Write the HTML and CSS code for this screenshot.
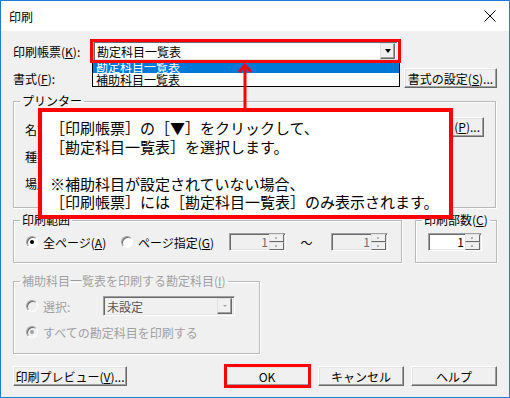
FILE: index.html
```html
<!DOCTYPE html>
<html lang="ja">
<head>
  <meta charset="UTF-8" />
  <title>印刷</title>
  <link rel="stylesheet" href="styles.css">
</head>
<body>

  <div class="window">
    <div class="titlebar">
      <span class="title">印刷</span>
      <svg class="close" width="12" height="12" viewBox="0 0 12 12">
        <path d="M0.5 0.5L11.5 11.5M11.5 0.5L0.5 11.5" stroke="#000" stroke-width="1" fill="none"/>
      </svg>
    </div>

    <div class="dialog">
      <div class="row row-report">
        <label class="lbl">印刷帳票(<u>K</u>):</label>
        <div class="combo combo-report">
          <span class="combo-text">勘定科目一覧表</span>
          <span class="drop"><i class="tri"></i></span>
        </div>
      </div>

      <div class="row row-format">
        <label class="lbl">書式(<u>F</u>):</label>
        <button class="btn btn-format">書式の設定(<u>S</u>)...</button>
      </div>

      <!-- printer -->
      <fieldset class="group group-printer">
        <legend>プリンター</legend>
        <div class="printer-body">
          <div class="prow">
            <span>名前(N):</span>
            <button class="btn btn-prop"><span>プロパティ(<u>P</u>)...</span></button>
          </div>
          <div class="prow"><span>種類:</span></div>
          <div class="prow"><span>場所:</span></div>
        </div>
      </fieldset>

      <div class="range-row">
        <fieldset class="group group-range">
          <legend>印刷範囲</legend>
          <div class="range-body">
            <span class="opt opt-all"><i class="radio checked"></i><span>全ページ(<u>A</u>)</span></span>
            <span class="opt opt-page"><i class="radio"></i><span>ページ指定(<u>G</u>)</span></span>
            <div class="spin disabled"><span class="val">1</span><span class="spin-btns"><i class="sb"></i><i class="sb"></i></span></div>
            <span class="tilde">〜</span>
            <div class="spin disabled"><span class="val">1</span><span class="spin-btns"><i class="sb"></i><i class="sb"></i></span></div>
          </div>
        </fieldset>

        <fieldset class="group group-copies">
          <legend>印刷部数(<u>C</u>)</legend>
          <div class="copies-body">
            <div class="spin spin-copies"><span class="val">1</span><span class="spin-btns"><i class="sb"></i><i class="sb"></i></span></div>
          </div>
        </fieldset>
      </div>

      <fieldset class="group group-sub off">
        <legend>補助科目一覧表を印刷する勘定科目(<u>I</u>)</legend>
        <div class="sub-body">
          <div class="sub-row">
            <span class="opt opt-select"><i class="radio"></i><span>選択:</span></span>
            <div class="combo combo-sub">
              <span class="combo-text">未設定</span>
              <span class="drop"><i class="tri"></i></span>
            </div>
          </div>
          <div class="sub-row">
            <span class="opt"><i class="radio checked"></i><span>すべての勘定科目を印刷する</span></span>
          </div>
        </div>
      </fieldset>

      <div class="actions">
        <button class="btn btn-preview">印刷プレビュー(<u>V</u>)...</button>
        <button class="btn btn-ok">OK</button>
        <button class="btn btn-cancel">キャンセル</button>
        <button class="btn btn-help">ヘルプ</button>
      </div>
    </div>

    <!-- overlays: open list, callout and highlights -->
    <div class="droplist">
      <div class="item sel">勘定科目一覧表</div>
      <div class="item">補助科目一覧表</div>
    </div>
    <div class="mark mark-combo"></div>
    <svg class="arrow" width="18" height="48" viewBox="0 0 18 48">
      <path d="M9 3V47" stroke="#ff0000" stroke-width="3" fill="none"/>
      <path d="M3 10L9 3L15 10" stroke="#ff0000" stroke-width="3" fill="none"/>
    </svg>
    <div class="note">
      ［印刷帳票］の［▼］をクリックして、<br>
      ［勘定科目一覧表］を選択します。<br>
      <br>
      ※補助科目が設定されていない場合、<br>
      ［印刷帳票］には［勘定科目一覧表］のみ表示されます。
    </div>
    <div class="mark mark-ok"></div>
  </div>

</body>
</html>
```

FILE: styles.css
```css
* {
  box-sizing: border-box;
}

body {
  margin: 0;
  font-family: "Noto Sans CJK JP", "Noto Sans", sans-serif;
  font-size: 12px;
  color: #000;
  background: #fff;
}

u {
  text-decoration: underline;
  text-underline-offset: 1px;
}

.window {
  position: relative;
  width: 510px;
  height: 398px;
  border: 1px solid #1c7cd5;
  background: #f0f0f0;
  overflow: hidden;
}

.titlebar {
  height: 30px;
  background: #fff;
  display: flex;
  align-items: center;
  justify-content: space-between;
  padding: 0 13px 0 8px;
}

.dialog {
  padding: 10px 12px 0 12px;
}

.row {
  display: flex;
  align-items: center;
}

.lbl {
  width: 80px;
}

/* sunken fields */
.combo,
.spin {
  display: flex;
  align-items: center;
  background: #fff;
  border: 1px solid;
  border-color: #a0a0a0 #fff #fff #a0a0a0;
  box-shadow: inset 1px 1px 0 #696969, inset -1px -1px 0 #e3e3e3;
}

.combo-report {
  width: 305px;
  height: 20px;
  padding: 0 2px 0 2px;
}

.combo-text {
  flex: 1;
  padding-left: 1px;
}

.drop {
  width: 15px;
  height: 16px;
  background: #f0f0f0;
  border: 1px solid;
  border-color: #e3e3e3 #696969 #696969 #e3e3e3;
  box-shadow: inset -1px -1px 0 #a0a0a0;
  display: flex;
  align-items: center;
  justify-content: center;
}

.tri {
  width: 0;
  height: 0;
  border-left: 3.5px solid transparent;
  border-right: 3.5px solid transparent;
  border-top: 4px solid #000;
}

/* raised buttons */
.btn {
  font: inherit;
  color: #000;
  height: 20px;
  padding: 0;
  background: #f0f0f0;
  border: 1px solid;
  border-color: #fff #696969 #696969 #fff;
  box-shadow: inset -1px -1px 0 #a0a0a0, inset 1px 1px 0 #e3e3e3;
  white-space: nowrap;
}

.row-format {
  margin-top: 7px;
}

.btn-format {
  margin-left: auto;
  width: 93px;
}

/* group boxes */
.group {
  margin: 0;
  padding: 0;
  border: 1px solid #b9b9b9;
  box-shadow: inset 1px 1px 0 #fff, 1px 1px 0 #fff;
  min-width: 0;
}

.group legend {
  margin-left: 6px;
  padding: 0 2px;
  line-height: 14px;
}

.group-printer {
  margin-top: 6px;
  height: 114px;
  margin-right: 1px;
}

.printer-body {
  padding: 8px 11px 0 11px;
}

.prow {
  height: 27px;
  display: flex;
  align-items: center;
}

.btn-prop {
  margin-left: auto;
  width: 81px;
  overflow: hidden;
  display: flex;
  align-items: center;
  justify-content: flex-end;
  padding-right: 3px;
  margin-top: -6px;
}

.range-row {
  display: flex;
  gap: 13px;
  margin-top: 5px;
}

.group-range {
  width: 389px;
  height: 50px;
}

.group-copies {
  width: 82px;
  height: 50px;
}

.range-body,
.copies-body {
  display: flex;
  align-items: center;
  padding-top: 6px;
}

.range-body {
  padding-left: 12px;
}

.copies-body {
  padding-left: 12px;
}

.opt {
  display: flex;
  align-items: center;
  gap: 5px;
  white-space: nowrap;
}

.opt-all {
  width: 95px;
}

.opt-page {
  width: 108px;
}

.radio {
  width: 12px;
  height: 12px;
  border-radius: 50%;
  background: #fff;
  border: 1px solid;
  border-color: #a0a0a0 #fff #fff #a0a0a0;
  box-shadow: inset 1px 1px 0 #696969;
  display: flex;
  align-items: center;
  justify-content: center;
}

.radio.checked::after {
  content: "";
  width: 4px;
  height: 4px;
  border-radius: 50%;
  background: #000;
}

.spin {
  width: 57px;
  height: 18px;
  padding: 1px;
}

.spin.disabled {
  background: #f0f0f0;
  color: #6d6d6d;
}

.spin-copies {
  width: 54px;
}

.val {
  flex: 1;
  text-align: right;
  padding-right: 1px;
  line-height: 14px;
}

.spin-btns {
  width: 15px;
  height: 16px;
  display: flex;
  flex-direction: column;
}

.sb {
  flex: 1;
  background: #f0f0f0;
  border: 1px solid;
  border-color: #e3e3e3 #696969 #696969 #e3e3e3;
  position: relative;
}

.sb::after {
  content: "";
  position: absolute;
  left: 5px;
  top: 2px;
  width: 2px;
  height: 2px;
  background: #b0b0b0;
}

.tilde {
  width: 45px;
  text-align: center;
  padding-right: 4px;
}

/* disabled sub account group */
.group-sub {
  width: 247px;
  height: 80px;
  margin-top: 11px;
}

.off {
  color: #a0a0a0;
}

.sub-body {
  padding: 8px 0 0 12px;
}

.sub-row {
  height: 20px;
  display: flex;
  align-items: center;
}

.sub-row + .sub-row {
  margin-top: 6px;
}

.opt-select {
  width: 77px;
}

.off .radio {
  background: #f0f0f0;
}

.off .radio.checked::after {
  background: #a0a0a0;
}

.combo-sub {
  width: 132px;
  height: 20px;
  padding: 0 2px;
  background: #f0f0f0;
  color: #555;
}

.off .tri {
  border-top-color: #a0a0a0;
  border-left-width: 2px;
  border-right-width: 2px;
  border-top-width: 2px;
}

.actions {
  display: flex;
  margin-top: 12px;
}

.btn-preview {
  width: 114px;
}

.btn-ok {
  margin-left: auto;
  width: 86px;
}

.btn-cancel {
  margin-left: 8px;
  width: 86px;
}

.btn-help {
  margin-left: 7px;
  width: 86px;
}

/* overlays */
.droplist {
  position: absolute;
  left: 91px;
  top: 59px;
  width: 308px;
  height: 27px;
  background: #fff;
  border: 1px solid #000;
  border-top: none;
  overflow: hidden;
}

.item {
  height: 13px;
  line-height: 13px;
  padding-left: 3px;
  white-space: nowrap;
}

.item.sel {
  background: #0078d7;
  color: #fff;
}

.mark {
  position: absolute;
  border: 3px solid #ff0000;
}

.mark-combo {
  left: 89px;
  top: 38px;
  width: 311px;
  height: 24px;
}

.mark-ok {
  left: 223px;
  top: 363px;
  width: 87px;
  height: 24px;
}

.arrow {
  position: absolute;
  left: 235px;
  top: 61px;
}

.note {
  position: absolute;
  left: 37px;
  top: 107px;
  width: 415px;
  height: 111px;
  background: #fff;
  border: 4px solid #ff0000;
  padding: 7px 0 0 8px;
  font-size: 15px;
  line-height: 18.5px;
  white-space: nowrap;
}
```
